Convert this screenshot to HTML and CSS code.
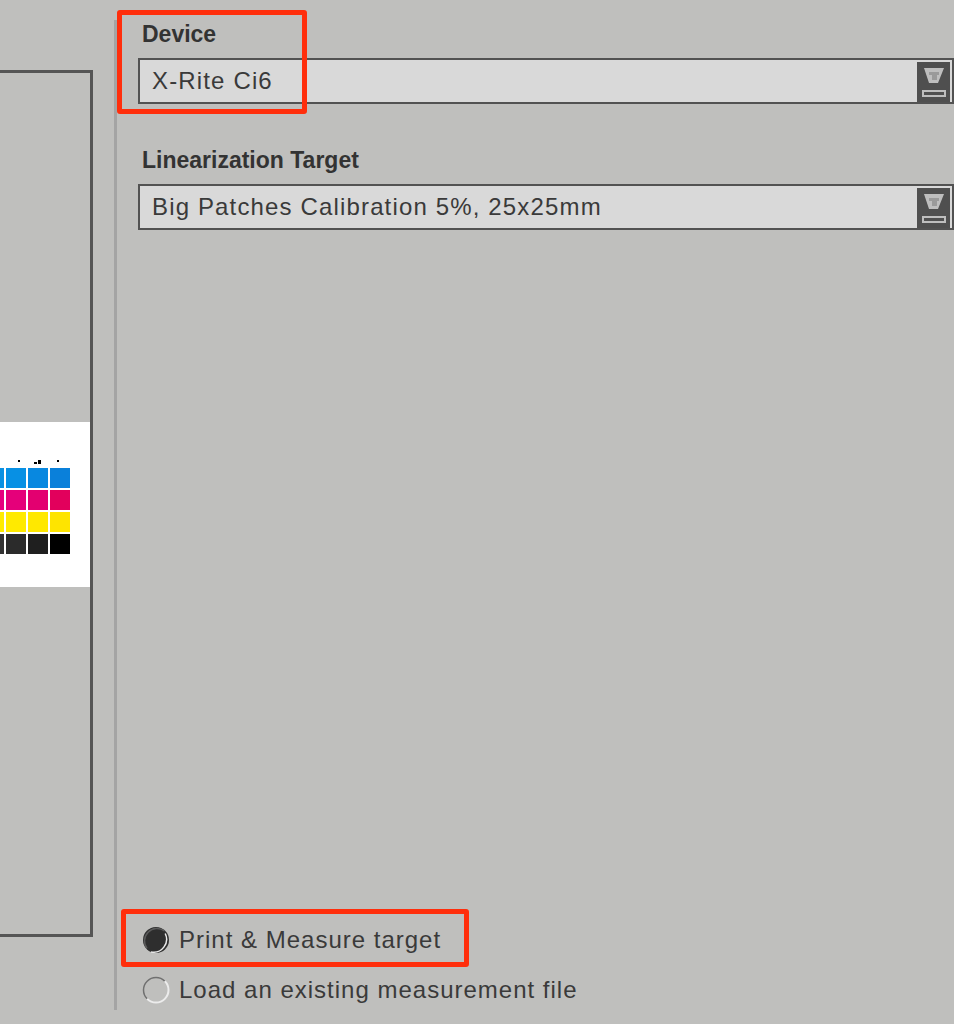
FILE: index.html
```html
<!DOCTYPE html>
<html>
<head>
<meta charset="utf-8">
<link rel="stylesheet" href="styles.css">
</head>
<body>
<div class="app">
  <div class="left">
    <div class="frame">
      <div class="sheet">
        <svg class="marks" width="90" height="6" viewBox="0 0 90 6">
          <rect x="18" y="0" width="2" height="2" fill="#000"/>
          <rect x="34" y="2" width="3" height="2" fill="#000"/>
          <rect x="38" y="0" width="3" height="4" fill="#000"/>
          <rect x="57" y="0" width="2" height="2" fill="#000"/>
        </svg>
        <div class="patches">
          <div class="p" style="background:#0a90e2"></div>
          <div class="p" style="background:#0790e4"></div>
          <div class="p" style="background:#0888e0"></div>
          <div class="p" style="background:#0a80da"></div>
          <div class="p" style="background:#e6007e"></div>
          <div class="p" style="background:#e5007a"></div>
          <div class="p" style="background:#e30070"></div>
          <div class="p" style="background:#e2005c"></div>
          <div class="p" style="background:#ffec00"></div>
          <div class="p" style="background:#ffea00"></div>
          <div class="p" style="background:#ffe800"></div>
          <div class="p" style="background:#fee400"></div>
          <div class="p" style="background:#333333"></div>
          <div class="p" style="background:#2b2b2b"></div>
          <div class="p" style="background:#1f1f1f"></div>
          <div class="p" style="background:#000000"></div>
        </div>
      </div>
    </div>
  </div>
  <div class="divider"></div>
  <div class="panel">
    <div class="field">
      <div class="label">Device</div>
      <div class="select">
        <span class="value">X-Rite Ci6</span>
        <span class="btn">
          <svg width="33" height="40" viewBox="0 0 33 40">
            <polygon points="7,6 27,6 21,21 12,21" fill="#bebebe"/>
            <rect x="12" y="10" width="10" height="3" fill="#9a9a9a"/>
            <rect x="15" y="13" width="5" height="5" fill="#9a9a9a"/>
            <rect x="6" y="29" width="22" height="5" fill="none" stroke="#bebebe" stroke-width="2"/>
          </svg>
        </span>
      </div>
    </div>
    <div class="field second">
      <div class="label">Linearization Target</div>
      <div class="select">
        <span class="value">Big Patches Calibration 5%, 25x25mm</span>
        <span class="btn">
          <svg width="33" height="40" viewBox="0 0 33 40">
            <polygon points="7,6 27,6 21,21 12,21" fill="#bebebe"/>
            <rect x="12" y="10" width="10" height="3" fill="#9a9a9a"/>
            <rect x="15" y="13" width="5" height="5" fill="#9a9a9a"/>
            <rect x="6" y="29" width="22" height="5" fill="none" stroke="#bebebe" stroke-width="2"/>
          </svg>
        </span>
      </div>
    </div>
    <div class="radios">
      <div class="radio">
        <svg width="28" height="28" viewBox="0 0 28 28">
          <circle cx="14" cy="14" r="13" fill="#2e2e2e"/>
          <path d="M23.2 7.5 A13 13 0 0 1 9 26" fill="none" stroke="#e8e8e8" stroke-width="1.5"/>
          <path d="M5 22.5 A12.5 12.5 0 0 1 22.5 5" fill="none" stroke="#5a5a5a" stroke-width="1.5"/>
        </svg>
        <span>Print &amp; Measure target</span>
      </div>
      <div class="radio">
        <svg width="28" height="28" viewBox="0 0 28 28">
          <path d="M5.16 22.84 A12.5 12.5 0 0 1 22.84 5.16" fill="none" stroke="#707070" stroke-width="1.5"/>
          <path d="M22.84 5.16 A12.5 12.5 0 0 1 5.16 22.84" fill="none" stroke="#ececec" stroke-width="2"/>
        </svg>
        <span>Load an existing measurement file</span>
      </div>
    </div>
  </div>
  <div class="hl hl-device"></div>
  <div class="hl hl-radio"></div>
</div>
</body>
</html>
```
FILE: styles.css
```css
html, body {
  margin: 0;
  padding: 0;
  background: #bfbfbd;
  overflow: hidden;
}
.app {
  position: relative;
  width: 954px;
  height: 1024px;
  display: flex;
  overflow: hidden;
  font-family: "Liberation Sans", Arial, sans-serif;
  color: #383838;
}
.left {
  width: 114px;
  flex: none;
}
.frame {
  margin-top: 70px;
  width: 90px;
  height: 861px;
  border: 3px solid #555555;
  border-left: none;
}
.sheet {
  margin-top: 349px;
  height: 165px;
  background: #ffffff;
  overflow: hidden;
}
.marks {
  display: block;
  margin-top: 38px;
}
.patches {
  margin-top: 2px;
  margin-left: -16px;
  display: grid;
  grid-template-columns: repeat(4, 20px);
  grid-auto-rows: 20px;
  gap: 2px;
}
.divider {
  flex: none;
  width: 3px;
  margin: 20px 0 14px;
  background: #a4a4a4;
}
.panel {
  flex: 1;
  display: flex;
  flex-direction: column;
  padding: 21px 0 9px 21px;
  min-width: 0;
}
.label {
  font-weight: bold;
  font-size: 23px;
  line-height: 26px;
  height: 26px;
  padding-left: 4px;
  color: #333333;
}
.select {
  margin-top: 11px;
  height: 42px;
  border: 2px solid #525252;
  background: #d9d9d9;
  display: flex;
  align-items: stretch;
}
.second {
  margin-top: 43px;
}
.value {
  flex: 1;
  padding-left: 12px;
  font-size: 24px;
  letter-spacing: 1.15px;
  line-height: 42px;
  color: #3a3a3a;
  white-space: nowrap;
}
.btn {
  flex: none;
  width: 33px;
  margin: 2px 2px 0 0;
  background: #4f4f4f;
}
.btn svg {
  display: block;
}
.radios {
  margin-top: auto;
  padding-left: 4px;
}
.radio {
  height: 50px;
  display: flex;
  align-items: center;
  gap: 9px;
  font-size: 24px;
  letter-spacing: 1px;
  color: #3a3a3a;
}
.radio svg {
  flex: none;
  display: block;
}
.hl {
  position: absolute;
  border: 5px solid #ff2e0c;
  border-radius: 3px;
  box-sizing: border-box;
}
.hl-device {
  left: 117px;
  top: 10px;
  width: 190px;
  height: 104px;
}
.hl-radio {
  left: 121px;
  top: 909px;
  width: 348px;
  height: 58px;
}
```
